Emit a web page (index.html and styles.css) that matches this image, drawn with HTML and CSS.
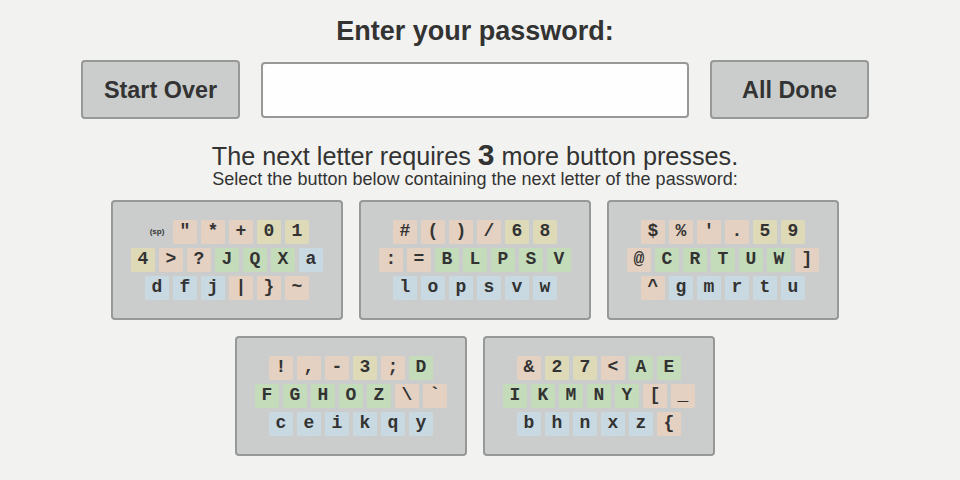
FILE: index.html
```html
<!DOCTYPE html>
<html lang="en">
<head>
<meta charset="utf-8">
<title>Enter your password</title>
<link rel="stylesheet" href="styles.css">
</head>
<body>
<main class="page">
<h1 class="title">Enter your password:</h1>
<div class="entry">
<button class="action">Start Over</button>
<input class="password" type="text" aria-label="Password">
<button class="action">All Done</button>
</div>
<p class="status">The next letter requires <strong>3</strong> more button presses.</p>
<p class="hint">Select the button below containing the next letter of the password:</p>
<div class="groups" id="groups"></div>
</main>
<script src="script.js"></script>
</body>
</html>
```
FILE: styles.css
```css
* { box-sizing: border-box; }
body {
  margin: 0;
  background: #f2f2f0;
  color: #333;
  font-family: "Liberation Sans", Arial, sans-serif;
}
.page { width: 950px; height: 480px; overflow: hidden; }
.title { margin: 16px 0 0; font-size: 27px; line-height: 31px; text-align: center; }
.entry { display: flex; justify-content: center; align-items: center; gap: 21px; margin-top: 13px; }
.action {
  width: 159px;
  height: 59px;
  padding: 2px 0 0;
  border: 2px solid #979998;
  border-radius: 4px;
  background: #cbcdcc;
  color: #333;
  font: bold 23.4px "Liberation Sans", Arial, sans-serif;
}
.password {
  width: 428px;
  height: 56px;
  border: 2px solid #979998;
  border-radius: 4px;
  background: #fefefe;
  font-size: 24px;
}
.status { margin: 21px 0 0; font-size: 25.2px; line-height: 32px; text-align: center; }
.status strong { font-size: 30px; line-height: 30px; }
.hint { margin: -3px 0 0; font-size: 18px; line-height: 21px; text-align: center; }
.groups { display: flex; flex-wrap: wrap; justify-content: center; gap: 16px; margin-top: 10px; }
.group {
  display: flex;
  flex-direction: column;
  justify-content: center;
  gap: 4px;
  width: 232px;
  height: 120px;
  padding: 0;
  border: 2px solid #979998;
  border-radius: 4px;
  background: #cbcdcc;
  color: #333;
}
.row { display: flex; justify-content: center; gap: 4px; }
.key {
  width: 24px;
  height: 24px;
  border-radius: 2px;
  font: bold 18px/22px "Liberation Mono", monospace;
  text-align: center;
}
.symbol { background: #e4d1c2; }
.digit { background: #dedab8; }
.upper { background: #c5dcba; }
.lower { background: #c9d9e2; }
.space { font: bold 8px/24px "Liberation Sans", Arial, sans-serif; }
```
FILE: script.js
```js
const groups = [
  [' "*+01', "4>?JQXa", "dfj|}~"],
  ["#()/68", ":=BLPSV", "lopsvw"],
  ["$%'.59", "@CRTUW]", "^gmrtu"],
  ["!,-3;D", "FGHOZ\\`", "ceikqy"],
  ["&27<AE", "IKMNY[_", "bhnxz{"]
];

function kind(ch) {
  if (ch === " ") return "space";
  if (/[0-9]/.test(ch)) return "digit";
  if (/[A-Z]/.test(ch)) return "upper";
  if (/[a-z]/.test(ch)) return "lower";
  return "symbol";
}

const container = document.getElementById("groups");
for (const rows of groups) {
  const button = document.createElement("button");
  button.className = "group";
  for (const chars of rows) {
    const row = document.createElement("span");
    row.className = "row";
    for (const ch of chars) {
      const key = document.createElement("span");
      key.className = "key " + kind(ch);
      key.textContent = ch === " " ? "(sp)" : ch;
      row.append(key);
    }
    button.append(row);
  }
  container.append(button);
}
```
